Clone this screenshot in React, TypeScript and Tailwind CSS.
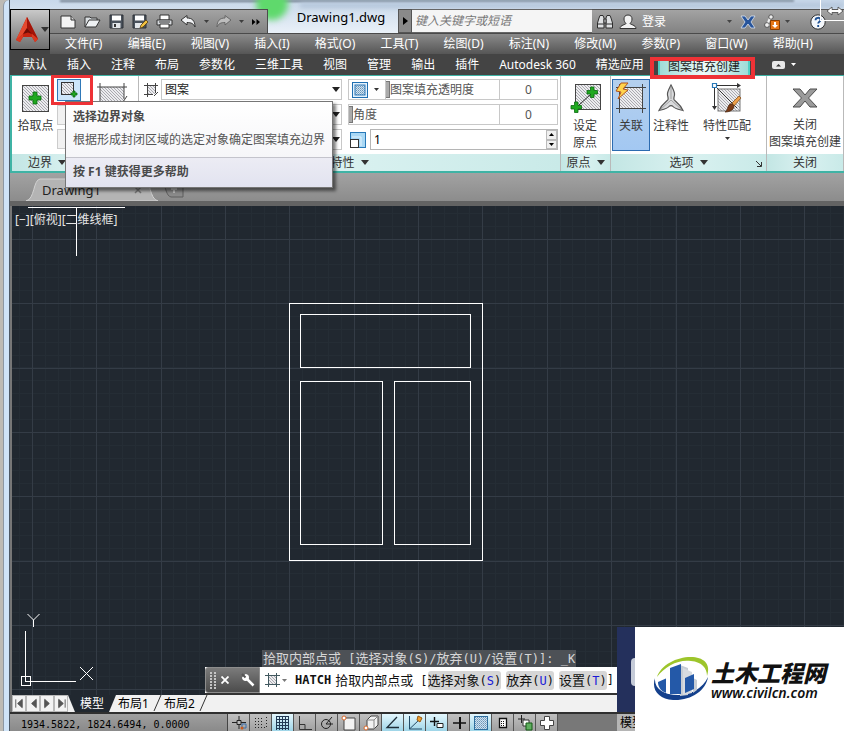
import type { ReactNode } from 'react';
import clsx from 'clsx';

const menus = [
  '文件(F)', '编辑(E)', '视图(V)', '插入(I)', '格式(O)', '工具(T)',
  '绘图(D)', '标注(N)', '修改(M)', '参数(P)', '窗口(W)', '帮助(H)',
];

const ribbonTabs = [
  '默认', '插入', '注释', '布局', '参数化', '三维工具', '视图', '管理',
  '输出', '插件', 'Autodesk 360', '精选应用',
];

function Caret({ className = '' }: { className?: string }) {
  return (
    <svg className={clsx('shrink-0', className)} width="8" height="5" viewBox="0 0 8 5" aria-hidden="true">
      <path d="M0 0h8L4 5z" fill="currentColor" />
    </svg>
  );
}

function SmallCaret({ className = '' }: { className?: string }) {
  return (
    <svg className={clsx('shrink-0', className)} width="5" height="3" viewBox="0 0 5 3" aria-hidden="true">
      <path d="M0 0h5L2.5 3z" fill="currentColor" />
    </svg>
  );
}

// Diagonal fill shared by all the hatch icons
function HatchDefs() {
  return (
    <svg className="absolute h-0 w-0" aria-hidden="true">
      <defs>
        <pattern id="hatch" width="3" height="3" patternUnits="userSpaceOnUse">
          <rect width="3" height="3" fill="#ececef" />
          <path d="M0 0l3 3M-1 2l2 2M2 -1l2 2" stroke="#8c8c93" strokeWidth="0.7" />
        </pattern>
        <pattern id="dots" width="2" height="2" patternUnits="userSpaceOnUse">
          <rect width="2" height="2" fill="#cfe3f2" />
          <rect width="1" height="1" fill="#6a93b5" />
          <rect x="1" y="1" width="1" height="1" fill="#8fb0ca" />
        </pattern>
      </defs>
    </svg>
  );
}

/* ---------- title bar ---------- */

function QuickButton({ label, className, children }: { label: string; className?: string; children: ReactNode }) {
  return (
    <button type="button" aria-label={label} className={clsx('flex shrink-0 items-center justify-center', className)}>
      {children}
    </button>
  );
}

function QuickAccess() {
  return (
    <div className="flex h-6 w-[218px] shrink-0 items-center border-t border-r border-[#4c4c4c] bg-linear-to-b from-[#a3a3a3] to-[#828282] pl-[6px] text-[#3d3d3d]">
      <QuickButton label="新建" className="w-6">
        <svg width="18" height="15" viewBox="0 0 18 15">
          <path d="M2 2h10l4 4v8H2z" fill="#f4f4f4" stroke="#333" />
          <path d="M12 2v4h4" fill="#cfcfcf" stroke="#333" />
        </svg>
      </QuickButton>
      <QuickButton label="打开" className="w-6">
        <svg width="18" height="15" viewBox="0 0 18 15">
          <path d="M2 13V3h5l1 1h6v3" fill="#d9dde0" stroke="#333" />
          <path d="M2 13l4-7h11l-4 7z" fill="#eef1f3" stroke="#333" />
        </svg>
      </QuickButton>
      <QuickButton label="保存" className="w-6">
        <svg width="15" height="15" viewBox="0 0 15 15">
          <path d="M1 1h13v13H1z" fill="#4a525c" stroke="#2c3036" />
          <path d="M3 1.500h9v5H3z" fill="#fff" />
          <path d="M3.500 9h8v5h-8z" fill="#e2e6ea" />
          <path d="M5 10h2v3H5z" fill="#333" />
        </svg>
      </QuickButton>
      <QuickButton label="另存为" className="w-6">
        <svg width="17" height="15" viewBox="0 0 17 15">
          <path d="M1 1h13v13H1z" fill="#4a525c" stroke="#2c3036" />
          <path d="M3 1.500h9v5H3z" fill="#fff" />
          <path d="M3 9h7v5H3z" fill="#e2e6ea" />
          <path d="M8 14l1-3 5-5 2 2-5 5z" fill="#f0c040" stroke="#5a4010" strokeWidth="0.8" />
        </svg>
      </QuickButton>
      <QuickButton label="打印" className="w-6">
        <svg width="17" height="15" viewBox="0 0 17 15">
          <path d="M4 1h9v5H4z" fill="#fff" stroke="#333" />
          <path d="M1 6h15v5H1z" fill="#d7dade" stroke="#333" />
          <path d="M4 10h9v4H4z" fill="#fff" stroke="#333" />
          <path d="M3 8h11" stroke="#333" />
        </svg>
      </QuickButton>
      <QuickButton label="放弃" className="w-6">
        <svg width="17" height="13" viewBox="0 0 17 13">
          <path d="M1 5l6-4.500V3c5 0 8 2.500 8 9-1.500-3.500-4-4.500-8-4.500V10z" fill="#f1f3f5" stroke="#333" />
        </svg>
      </QuickButton>
      <SmallCaret className="mx-1" />
      <QuickButton label="重做" className="w-5">
        <svg width="17" height="13" viewBox="0 0 17 13">
          <path d="M16 5l-6-4.500V3c-5 0-8 2.500-8 9 1.500-3.500 4-4.500 8-4.500V10z" fill="#bdbdbd" stroke="#666" />
        </svg>
      </QuickButton>
      <SmallCaret className="mx-[6px]" />
      <QuickButton label="更多" className="w-3">
        <svg width="8" height="6" viewBox="0 0 8 6">
          <path d="M0 0l3.500 3L0 6zM4.500 0L8 3 4.500 6z" fill="#000" />
        </svg>
      </QuickButton>
    </div>
  );
}

function TitleRow() {
  return (
    <div className="flex h-6">
      <QuickAccess />
      <div className="flex-1 basis-[130px] truncate pl-4 text-center text-[13px] leading-4 text-black">Drawing1.dwg</div>
      <button type="button" aria-label="隐藏搜索" className="flex w-[14px] shrink-0 items-center justify-center border border-[#555] bg-[#8a8a8a]">
        <svg width="5" height="8" viewBox="0 0 5 8"><path d="M0 0l5 4-5 4z" fill="#000" /></svg>
      </button>
      <input
        type="text"
        aria-label="搜索"
        placeholder="键入关键字或短语"
        className="w-[180px] shrink-0 border-y border-[#666] bg-[#f5f5f5] px-[3px] text-xs italic placeholder:text-[#777]"
      />
      <div className="flex w-[252px] shrink-0 items-center border-t border-[#555] bg-linear-to-b from-[#a3a3a3] to-[#828282] pl-1 text-[#444]">
        <button type="button" aria-label="查找">
          <svg width="18" height="16" viewBox="0 0 18 16" fill="#dfe1e3" stroke="#2e2e2e">
            <path d="M3 4l1-2.500h3L8 4v10H1.500V9zM15 4l-1-2.500h-3L10 4v10h6.500V9z" />
            <path d="M8 5h2v4H8z" />
            <path d="M1.500 10H8M10 10h6.500" />
          </svg>
        </button>
        <button type="button" className="ml-1 flex items-center gap-1 text-xs text-white">
          <svg width="20" height="16" viewBox="0 0 20 16">
            <path d="M10 1c3 0 4 2 4 4 0 2-1 3.500-2 4.500 0 1 6 1.500 6 5H2c0-3.500 6-4 6-5C7 8.500 6 7 6 5c0-2 1-4 4-4z" fill="#f2f2f2" stroke="#333" />
          </svg>
          登录
        </button>
        <SmallCaret className="ml-auto" />
        <button type="button" aria-label="Exchange" className="ml-2">
          <svg width="16" height="14" viewBox="0 0 16 14">
            <path d="M1 1h4l3 4 3-4h4l-4 6 4 6h-4L8 9l-3 4H1l4-6z" fill="#27549b" stroke="#d9e2ef" strokeWidth="0.8" />
          </svg>
        </button>
        <button type="button" aria-label="Autodesk 360" className="ml-2">
          <svg width="17" height="16" viewBox="0 0 17 16">
            <path d="M6 4L3 11h6" fill="none" stroke="#f2f2f2" strokeWidth="2" />
            <circle cx="7" cy="3" r="2.200" fill="#eee" stroke="#333" strokeWidth="0.7" />
            <circle cx="3" cy="11" r="2.400" fill="#eee" stroke="#333" strokeWidth="0.7" />
            <path d="M6.500 6.500h9v9h-9z" fill="#e77817" stroke="#8a3f00" />
            <path d="M10 8h2v3h2l-3 3-3-3h2z" fill="#fff" />
          </svg>
        </button>
        <SmallCaret className="ml-1" />
        <button type="button" aria-label="帮助" className="mr-[18px] ml-5">
          <svg width="16" height="16" viewBox="0 0 16 16">
            <circle cx="8" cy="8" r="7.200" fill="#f4f7fb" stroke="#333" />
            <path d="M5.500 6.200C5.500 3 10.500 3 10.500 6c0 1.800-2.300 1.800-2.300 3.600M8.200 11v2" fill="none" stroke="#1d4f91" strokeWidth="1.800" />
          </svg>
        </button>
      </div>
    </div>
  );
}

function Header() {
  return (
    <header className="relative overflow-hidden bg-linear-to-b from-[#c8d8ea] via-[#eef4fa] to-[#f7fafd] pt-[9px]">
      {/* glass caption with the desktop showing through */}
      <div className="absolute inset-x-[50px] top-0 h-[2px] bg-[#6b7886] blur-[1px]" />
      <div className="absolute top-[3px] right-0 left-[290px] h-[5px] bg-[#b3c5da] blur-[2px]" />
      <div className="absolute -top-3 left-[246px] h-8 w-8 rounded-full bg-[#5fd96c] blur-[3px]" />
      <div className="relative flex">
        <div className="w-10 shrink-0 bg-[#444]">
          <button type="button" aria-label="应用程序菜单" className="flex h-[41px] w-10 items-center gap-[2px] border border-black bg-linear-to-b from-[#c9c9c9] to-[#6e6e6e] pl-1">
            <svg className="shrink-0" width="24" height="28" viewBox="0 0 24 28">
              <path d="M12 1L1 24l4 2 3-5h9l3 5 3-3z" fill="#c5230f" />
              <path d="M12 1L1 24l7-6 4-6z" fill="#e5492e" />
              <path d="M12 1l11 22-6-5-5-6z" fill="#a31408" />
              <path d="M8 18l4-6 5 6-4-1.500z" fill="#6f0c05" />
              <path d="M1 24l7-6v3l-3 5zM17 18l6 5-3 3-3-5z" fill="#d93a22" />
            </svg>
            <Caret className="text-[#333]" />
          </button>
        </div>
        <div className="min-w-0 flex-1">
          <TitleRow />
          <nav className="flex h-[21px] items-center justify-between border-t border-[#4a4a4a] bg-linear-to-b from-[#8b8b8b] to-[#565656] pr-[31px] pl-[15px] text-xs text-white">
            {menus.map((menu) => (
              <button key={menu} type="button" className="shrink-0 whitespace-nowrap">{menu}</button>
            ))}
          </nav>
        </div>
        {/* resize pointer over the help button */}
        <svg className="absolute -top-[9px] right-0" width="34" height="24" viewBox="0 0 34 24" aria-hidden="true">
          <path d="M10.500 0v20M10 20.500h24" stroke="#fff" />
          <path d="M17 11l5-4v2.500h6V7l5 4-5 4v-2.500h-6V15z" fill="#fff" stroke="#444" strokeWidth="0.8" />
        </svg>
      </div>
      <nav className="relative flex h-[21px] bg-[#444] pl-[3px] text-xs text-white">
        {ribbonTabs.map((tab) => (
          <button key={tab} type="button" className="shrink-0 px-2.5 whitespace-nowrap">{tab}</button>
        ))}
        <button type="button" className="mt-1 ml-1 shrink-0 border-x-2 border-[#52cfc5] bg-linear-to-r from-[#9fdcd8] via-[#eefafa] to-[#9fdcd8] px-2 leading-4 whitespace-nowrap text-[#222]">
          图案填充创建
        </button>
        <button type="button" aria-label="最小化功能区" className="ml-[22px] flex items-center gap-[6px]">
          <svg width="13" height="8" viewBox="0 0 13 8">
            <rect width="13" height="8" rx="2" fill="#e8e8e8" />
            <path d="M4 5.500L6.500 3 9 5.500z" fill="#333" />
          </svg>
          <SmallCaret />
        </button>
      </nav>
    </header>
  );
}

/* ---------- ribbon ---------- */

function Panel({ title, caret, launcher, className, children }: {
  title: string;
  caret?: boolean;
  launcher?: boolean;
  className?: string;
  children: ReactNode;
}) {
  return (
    <section className={clsx('flex flex-col border-r border-[#b9b9b9]', className)}>
      <div className="flex h-[78px] px-1 pt-[3px]">{children}</div>
      <div className="relative flex h-[17px] items-center justify-center gap-[6px] bg-linear-to-r from-[#c3e6e4] via-[#d9f1f0] to-[#c9eae8] text-xs text-[#333]">
        {title}
        {caret && <Caret />}
        {launcher && (
          <button type="button" aria-label="图案填充设置" className="absolute right-1 bottom-1">
            <svg width="6" height="6" viewBox="0 0 6 6"><path d="M0 0l5 5M5.500 1v4.500H1" fill="none" stroke="#333" /></svg>
          </button>
        )}
      </div>
    </section>
  );
}

function BigButton({ icon, lines, active, className }: { icon: ReactNode; lines: string[]; active?: boolean; className?: string }) {
  return (
    <button
      type="button"
      className={clsx(
        'flex h-[72px] shrink-0 flex-col items-center border pt-[2px] text-xs leading-[17px] whitespace-nowrap text-[#3a3a3a]',
        active ? 'border-[#2c6bb0] bg-linear-to-b from-[#b5d0ee] to-[#a3c8f2]' : 'border-transparent',
        className,
      )}
    >
      <span className="mb-[3px] flex h-8 items-center">{icon}</span>
      {lines.map((line) => <span key={line}>{line}</span>)}
    </button>
  );
}

const plus = (x: number, y: number, s: number) => (
  <path
    d={`M${x + s} ${y}h${s}v${s}h${s}v${s}h-${s}v${s}h-${s}v-${s}h-${s}v-${s}h${s}z`}
    fill="#1fa81f"
    stroke="#0b6b12"
    strokeWidth="0.8"
  />
);

function BoundaryPanel() {
  return (
    <Panel title="边界" caret className="w-[127px] shrink-0 [&>div:last-child]:justify-start [&>div:last-child]:pl-4">
      <BigButton
        className="w-[39px]"
        lines={['拾取点']}
        icon={
          <svg width="27" height="27" viewBox="0 0 27 27">
            <rect x="0.500" y="0.500" width="26" height="26" fill="url(#hatch)" stroke="#444" />
            {plus(7, 7, 4)}
          </svg>
        }
      />
      <div className="ml-[2px] flex flex-col gap-1">
        <div className="relative">
          <button type="button" aria-label="选择边界对象" className="flex h-[22px] w-6 items-center justify-center border border-[#2f78b8] bg-[#cde6fa]">
            <svg width="20" height="18" viewBox="0 0 20 18">
              <rect x="2.500" y="1.500" width="12" height="12" fill="url(#hatch)" stroke="#333" />
              {plus(12, 10, 2)}
            </svg>
          </button>
          {/* highlight frame */}
          <span className="pointer-events-none absolute -top-1 -left-[6px] z-30 h-[30px] w-[42px] border-3 border-[#ee3236]" />
        </div>
        <button type="button" aria-label="删除边界对象" className="h-5 w-6 border border-[#ccc] bg-[#f1f1f1]" />
        <button type="button" aria-label="显示边界对象" className="h-5 w-6 border border-[#ccc] bg-[#f1f1f1]" />
      </div>
      <BigButton
        className="ml-4 w-8"
        lines={[]}
        icon={
          <svg width="32" height="30" viewBox="0 0 32 30">
            <rect x="3" y="4" width="24" height="22" fill="url(#hatch)" />
            <path d="M0 4h30M3 0v30M27 0v16" stroke="#444" />
            <path d="M30 13l-4 6" stroke="#444" />
          </svg>
        }
      />
    </Panel>
  );
}

function PropertySelect({ label, value, icon }: { label: string; value: string; icon?: ReactNode }) {
  return (
    <label className="relative flex h-[21px] items-center gap-[2px]">
      <span className="w-4 shrink-0">{icon}</span>
      <select aria-label={label} defaultValue={value} className="h-full min-w-0 flex-1 appearance-none border border-[#c8c8c8] bg-white px-[3px] text-xs text-[#222]">
        <option>{value}</option>
      </select>
      <Caret className="pointer-events-none absolute right-[2px] text-[#222]" />
    </label>
  );
}

function SliderField({ id, label, children }: { id: string; label: string; children?: ReactNode }) {
  return (
    <div className="flex h-[21px] border border-[#c8c8c8] bg-white text-xs text-[#555]">
      {children}
      <label htmlFor={id} className="flex min-w-0 flex-1 items-center">
        <span className="h-[17px] w-1 shrink-0 border border-l-0 border-[#777] bg-[#aaa]" />
        {label}
      </label>
      <input id={id} type="text" defaultValue="0" className="w-[58px] border-l border-[#c8c8c8] text-center text-[#555]" />
    </div>
  );
}

function PropertiesPanel() {
  return (
    <Panel title="特性" caret className="min-w-0 flex-1 [&>div:first-child]:pr-[2px]">
      <div className="mr-[6px] flex min-w-0 flex-1 flex-col gap-1">
        <PropertySelect
          label="图案填充类型"
          value="图案"
          icon={
            <svg width="17" height="16" viewBox="0 0 17 16">
              <rect x="4" y="3" width="9" height="9" fill="url(#hatch)" />
              <path d="M1 3.500h14M4.500 1v14M12.500 1v10M1 12.500h9M15 10l-4 4" stroke="#444" fill="none" />
            </svg>
          }
        />
        <PropertySelect label="图案填充颜色" value="使用当前项" />
        <PropertySelect label="背景色" value="无" />
      </div>
      <div className="flex w-[210px] shrink-0 flex-col gap-1">
        <SliderField id="transparency" label="图案填充透明度">
          <button type="button" aria-label="透明度" className="flex w-[37px] shrink-0 items-center gap-[6px] border-r border-[#c8c8c8] pl-[3px] text-[#333]">
            <svg width="16" height="16" viewBox="0 0 16 16">
              <rect x="0.500" y="0.500" width="15" height="15" fill="#e4f2fc" stroke="#1f6fb2" />
              <rect x="3" y="3" width="10" height="10" fill="url(#dots)" stroke="#2f78b8" />
            </svg>
            <SmallCaret />
          </button>
        </SliderField>
        <SliderField id="angle" label="角度" />
        <div className="flex h-[21px] items-center gap-1">
          <svg className="ml-[2px] shrink-0" width="16" height="16" viewBox="0 0 16 16" aria-hidden="true">
            <rect x="0.500" y="0.500" width="15" height="15" fill="#a9d8f5" stroke="#2879b8" />
            <rect x="0.500" y="7.500" width="8" height="8" fill="#fff" stroke="#333" />
            <path d="M2 5h9v9" fill="none" stroke="#e5f4fd" />
          </svg>
          <div className="flex h-[21px] min-w-0 flex-1 border border-[#b5b5b5] bg-white">
            <input type="text" aria-label="图案填充比例" defaultValue="1" className="min-w-0 flex-1 px-[3px] text-xs text-black" />
            <div className="flex w-[11px] shrink-0 flex-col text-black">
              <button type="button" aria-label="增大" className="flex flex-1 items-center justify-center border border-[#bbb] bg-[#f0f0f0]">
                <SmallCaret className="rotate-180" />
              </button>
              <button type="button" aria-label="减小" className="flex flex-1 items-center justify-center border border-[#bbb] bg-[#f0f0f0]">
                <SmallCaret />
              </button>
            </div>
          </div>
        </div>
      </div>
    </Panel>
  );
}

function Ribbon() {
  return (
    <div className="flex border-t border-b-2 border-l-2 border-[#3fb3a5] bg-white">
      <BoundaryPanel />
      <PropertiesPanel />
      <Panel title="原点" caret className="w-[50px] shrink-0">
        <BigButton
          className="w-10"
          lines={['设定', '原点']}
          icon={
            <svg width="32" height="32" viewBox="0 0 32 32">
              <rect x="6.500" y="2.500" width="25" height="25" fill="url(#hatch)" stroke="#444" />
              <path d="M9 24L23 11" stroke="#222" />
              {plus(18, 5, 3.5)}
              {plus(2, 20, 3.5)}
            </svg>
          }
        />
      </Panel>
      <Panel title="选项" caret launcher className="w-[156px] shrink-0 [&>div:first-child]:px-px">
        <BigButton
          active
          className="w-[38px]"
          lines={['关联']}
          icon={
            <svg width="32" height="32" viewBox="0 0 32 32">
              <rect x="4" y="5" width="24" height="22" fill="url(#hatch)" />
              <path d="M1 5.500h30M4.500 2v29M27.500 2v29M1 26.500h30" stroke="#444" />
              <path d="M6 1L1 9l5 1-3 7 10-9-5-1 5-6z" fill="#ffd34d" stroke="#b3541e" />
            </svg>
          }
        />
        <BigButton
          className="w-[42px]"
          lines={['注释性']}
          icon={
            <svg width="30" height="30" viewBox="0 0 30 30">
              <path d="M15 2c2 4 4 7 3.500 10-.3 2-1 3-.5 4.500 1 2 6 4 9 11-4-1-8-1.500-10-4-1-1.300-3-1.300-4 0-2 2.500-6 3-10 4 3-7 8-9 9-11 .5-1.500-.2-2.500-.5-4.500C11 9 13 6 15 2z" fill="#d9dadc" stroke="#555" strokeWidth="1.200" />
              <path d="M15 3v13M15 17L4 27M15 17l11 10" stroke="#888" strokeWidth="0.700" />
            </svg>
          }
        />
        <div className="relative">
          <BigButton
            className="ml-[3px] w-[64px]"
            lines={['特性匹配']}
            icon={
              <svg width="32" height="32" viewBox="0 0 32 32">
                <rect x="7" y="7" width="22" height="22" fill="url(#hatch)" stroke="#777" />
                <path d="M5 3.500h24M3.500 5v22" stroke="#333" />
                <path d="M26 1l4 2.500L26 6zM1 24l2.500 4L6 24z" fill="#333" />
                <path d="M4 4l22 22" stroke="#333" />
                <path d="M1.500 1.500h4v4h-4z" fill="#fff" stroke="#2879b8" strokeWidth="1.200" />
                <path d="M21 21l7-7 2 2-7 8z" fill="#eda04a" stroke="#7b4210" strokeWidth="0.700" />
                <path d="M14 30c3-1 2-6 5-8 2-1 4 1 4 3-1 4-6 5-9 5z" fill="#7a3b16" stroke="#44200a" strokeWidth="0.700" />
              </svg>
            }
          />
          <SmallCaret className="absolute bottom-[14px] left-[33px] text-[#333]" />
        </div>
      </Panel>
      <Panel title="关闭" className="w-[77px] shrink-0 [&>div:first-child]:px-0">
        <BigButton
          className="w-full"
          lines={['关闭', '图案填充创建']}
          icon={
            <svg width="26" height="20" viewBox="0 0 26 20">
              <path d="M1 1h7l5 6 5-6h7l-8.500 9L25 19h-7l-5-6-5 6H1l8.500-9z" fill="#9b9b9b" stroke="#4d4d4d" />
            </svg>
          }
        />
      </Panel>
    </div>
  );
}

function Tooltip() {
  return (
    <div role="tooltip" className="absolute top-[101px] left-[55px] z-20 border border-[#767676] bg-linear-to-b from-white to-[#f1f1f5] text-xs text-[#555] shadow-[3px_3px_3px_rgba(0,0,0,0.5)]">
      <div className="px-[7px]">
        <p className="pt-[6px] leading-[18px] font-bold text-[#4a4a4a]">选择边界对象</p>
        <p className="py-[5px] leading-[18px] whitespace-nowrap">根据形成封闭区域的选定对象确定图案填充边界</p>
      </div>
      <p className="mt-[3px] border-t border-[#c4c4cc] bg-linear-to-b from-[#ececf4] to-[#e2e3f0] px-[7px] pt-[5px] pb-[6px] leading-[18px] font-bold text-[#4a4a4a]">
        按 F1 键获得更多帮助
      </p>
    </div>
  );
}

function DocumentTabs() {
  return (
    <div className="flex h-[33px] border-b-[5px] border-[#636363] bg-linear-to-b from-[#a2a2a2] to-[#8c8c8c] pt-[5px] pl-4">
      <div className="relative flex w-[132px] items-center pl-4 text-[13px] leading-4 text-[#222]">
        <svg className="absolute inset-0 h-full w-full" viewBox="0 0 132 23" preserveAspectRatio="none" aria-hidden="true">
          <path d="M0 23C9 21 7 2 14 1h104c7 1 5 20 14 22z" fill="#b4b4b4" stroke="#d2d2d2" />
        </svg>
        <button type="button" className="relative">Drawing1</button>
        <button type="button" aria-label="关闭图形" className="relative ml-auto mr-4">
          <svg width="8" height="8" viewBox="0 0 8 8"><path d="M1 1l6 6M7 1L1 7" stroke="#777" strokeWidth="1.500" /></svg>
        </button>
      </div>
      <button type="button" aria-label="新图形" className="ml-1">
        <svg width="24" height="16" viewBox="0 0 24 16">
          <path d="M1 1h20v14H9C4 14 4 5 1 1z" fill="#8a8a8a" stroke="#5f5f5f" />
          <path d="M9 7h6M12 4v7" stroke="#bbb" strokeWidth="2" />
        </svg>
      </button>
    </div>
  );
}

/* ---------- drawing area ---------- */

const majorStep = 64.35;
const majorX = Array.from({ length: 30 }, (_, i) => Math.round(20 + i * majorStep));
const majorY = Array.from({ length: 20 }, (_, i) => Math.round(33 + i * majorStep));
const minorX = Array.from({ length: 150 }, (_, i) => Math.round(7 + (i * majorStep) / 5));
const minorY = Array.from({ length: 100 }, (_, i) => Math.round(7 + (i * majorStep) / 5));

function Model() {
  return (
    <svg className="absolute inset-0 h-full w-full" fill="none" shapeRendering="crispEdges" aria-label="模型空间">
      <g stroke="#252d35">
        {minorX.map((x) => <line key={`x${x}`} x1={x + 0.5} x2={x + 0.5} y1="0" y2="100%" />)}
        {minorY.map((y) => <line key={`y${y}`} y1={y + 0.5} y2={y + 0.5} x1="0" x2="100%" />)}
      </g>
      <g stroke="#343c46">
        {majorX.map((x) => <line key={`x${x}`} x1={x + 0.5} x2={x + 0.5} y1="0" y2="100%" />)}
        {majorY.map((y) => <line key={`y${y}`} y1={y + 0.5} y2={y + 0.5} x1="0" x2="100%" />)}
      </g>
      <g stroke="#fff">
        <rect x="277.500" y="97.500" width="193" height="257" />
        <rect x="288.500" y="108.500" width="170" height="53" />
        <rect x="288.500" y="175.500" width="82" height="163" />
        <rect x="382.500" y="175.500" width="76" height="163" />
        {/* cursor */}
        <path d="M16 1.500h97M64.500 1v49" />
        {/* UCS icon */}
        <path d="M13.500 425v50.500H64M9.500 470.500h9v9h-9z" />
      </g>
      <path d="M15.500 408l6 6 6-6M21.500 414v7M68 461l13 13M81 461l-13 13" stroke="#fff" shapeRendering="auto" />
    </svg>
  );
}

// Full-width characters are set one size up from the monospaced latin text
function CommandText({ text }: { text: string }) {
  return (
    <>
      {text.split(/([\x20-\x7e]+)/).map((part, i) => (
        <span key={i} className={i % 2 ? 'text-xs' : 'text-[13px]'}>{part}</span>
      ))}
    </>
  );
}

const options = [
  { name: '选择对象', key: 'S' },
  { name: '放弃', key: 'U' },
  { name: '设置', key: 'T' },
];

function CommandLine() {
  return (
    <div className="absolute right-[227px] bottom-0 left-[193px] font-['DejaVu_Sans_Mono','Noto_Sans_CJK_SC',monospace]">
      <p className="ml-[57px] w-fit bg-[#4d5156] px-px leading-4 whitespace-pre text-[#d6d6d6]">
        <CommandText text="拾取内部点或 [选择对象(S)/放弃(U)/设置(T)]: _K" />
      </p>
      <div className="flex h-7 border-b-2 border-[#333] bg-white">
        <div className="flex w-[55px] shrink-0 items-center rounded-l-[3px] border border-[#8d8d8d] bg-linear-to-b from-[#7b7b7b] to-[#4c4c4c] pl-1">
          <svg width="6" height="17" viewBox="0 0 6 17" aria-hidden="true">
            <path d="M1 0v17M5 0v17" stroke="#c5c5c5" strokeWidth="2" strokeDasharray="2 1" />
          </svg>
          <button type="button" aria-label="关闭" className="ml-[5px]">
            <svg width="8" height="8" viewBox="0 0 8 8"><path d="M0.500 0.500l7 7M7.500 0.500l-7 7" stroke="#fff" strokeWidth="1.800" /></svg>
          </button>
          <button type="button" aria-label="自定义" className="ml-3">
            <svg width="14" height="14" viewBox="0 0 14 14">
              <path d="M6 6l6.500 6.500" stroke="#fff" strokeWidth="2.500" />
              <path d="M1 4.500L4.500 1C8 1 9 5 7 7 5 9 1 8 1 4.500zM1 1l3.500 3.500" fill="#fff" />
              <path d="M1 1l3.500 3.500" stroke="#555" strokeWidth="2" />
            </svg>
          </button>
        </div>
        <div className="flex min-w-0 flex-1 items-center overflow-hidden pl-1 whitespace-pre text-[#111]">
          <svg className="shrink-0" width="17" height="16" viewBox="0 0 17 16" aria-hidden="true">
            <rect x="4" y="3" width="9" height="9" fill="url(#hatch)" />
            <path d="M1 3.500h15M4.500 1v14M12.500 1v14M1 12.500h15" stroke="#41585f" fill="none" />
          </svg>
          <SmallCaret className="ml-px text-[#777]" />
          <span className="ml-2 text-xs font-bold">HATCH</span>
          <span className="ml-1"><CommandText text="拾取内部点或 [" /></span>
          {options.map((option, i) => (
            <button key={option.key} type="button" className={clsx('rounded-[3px] bg-[#d6d6d6] leading-[18px]', i > 0 && 'ml-[5px]')}>
              <CommandText text={`${option.name}(`} />
              <span className="text-xs text-[#1a1ad6]">{option.key}</span>
              <span className="text-xs">)</span>
            </button>
          ))}
          <span className="text-xs">]</span>
        </div>
      </div>
    </div>
  );
}

/* ---------- bottom bars ---------- */

const navArrows = [
  { label: '第一个', d: 'M3 2v9M10 2L5 6.500l5 4.500z' },
  { label: '上一个', d: 'M10 2L5 6.500l5 4.500z' },
  { label: '下一个', d: 'M4 2l5 4.500L4 11z' },
  { label: '最后一个', d: 'M4 2l5 4.500L4 11zM11 2v9' },
];

function LayoutTabs() {
  return (
    <div className="flex h-[17px] bg-[#f1f1f1] text-xs leading-[17px] text-black">
      {navArrows.map((arrow) => (
        <button key={arrow.label} type="button" aria-label={arrow.label} className="w-[14px] shrink-0 border border-[#b9b9b9] bg-[#f3f3f3]">
          <svg width="12" height="13" viewBox="0 0 13 13"><path d={arrow.d} fill="#555" stroke="#555" /></svg>
        </button>
      ))}
      <button type="button" className="w-12 bg-[#212830] text-white [clip-path:polygon(0_0,100%_0,calc(100%-7px)_100%,7px_100%)]">模型</button>
      {['布局1', '布局2'].map((name) => (
        <button key={name} type="button" className="flex items-center pl-[2px]">
          {name}
          <svg className="ml-1" width="9" height="17" viewBox="0 0 9 17" aria-hidden="true">
            <path d="M8 0L1 16" stroke="#333" />
          </svg>
        </button>
      ))}
    </div>
  );
}

const cyan = 'bg-linear-to-b from-[#e4f7fd] to-[#9ed5e8]';

const toggles: { label: string; on?: boolean; icon: ReactNode }[] = [
  { label: '推断约束', icon: <><path d="M8 1v13M1 7.500h14" stroke="#222" /><path d="M6 5.500h4v4H6z" fill="#bbb" stroke="#222" /><path d="M11 9h4v4h-4z" fill="none" stroke="#3a6ea8" /><circle cx="11" cy="13" r="1.500" fill="#c85a1c" /></> },
  { label: '捕捉', icon: <path d="M2 3.500h9M2 6.500h9M2 9.500h9M2 12.500h12M13.500 2v11" stroke="#222" strokeDasharray="1 2" /> },
  { label: '栅格', on: true, icon: <path d="M1.500 1v14M4.500 1v14M7.500 1v14M10.500 1v14M13.500 1v14M1 1.500h13M1 4.500h13M1 7.500h13M1 10.500h13M1 13.500h13" stroke="#223a55" /> },
  { label: '正交', icon: <path d="M2.500 1v13.500H15M2 9.500h6v5" stroke="#333" fill="none" /> },
  { label: '极轴', icon: <><circle cx="7" cy="9" r="4.500" fill="none" stroke="#222" /><path d="M14 9H7l6-7" stroke="#222" fill="none" /></> },
  { label: '对象捕捉', icon: <><path d="M3 3h11v12H3z" fill="#f2f2f2" stroke="#444" /><circle cx="3" cy="3" r="2" fill="#fff" stroke="#d8682a" /></> },
  { label: '三维对象捕捉', icon: <><path d="M4 5l4-4h7v9l-4 4H4z" fill="#f2f2f2" stroke="#444" /><path d="M4 5h7v9M11 5l4-4" fill="none" stroke="#888" /><circle cx="3" cy="13" r="2" fill="#fff" stroke="#d8682a" /></> },
  { label: '对象捕捉追踪', on: true, icon: <path d="M14 12.500H2L12 2" stroke="#1f2f3a" fill="none" strokeWidth="1.300" /> },
  { label: '动态 UCS', on: true, icon: <><path d="M2.500 1v13H15M2.500 14L13 4" stroke="#224a66" fill="none" /><path d="M11 1l4 2-2 4-3-2z" fill="#f0a030" stroke="#9a5a10" /></> },
  { label: '动态输入', on: true, icon: <><path d="M1 6.500h9M5.500 2v9" stroke="#111" strokeWidth="1.400" /><path d="M8 8.500h6v4H8z" fill="#fff" stroke="#222" /></> },
  { label: '线宽', icon: <><path d="M2 8h13" stroke="#111" strokeWidth="1.500" /><path d="M9 2v12" stroke="#111" strokeWidth="2" /></> },
  { label: '透明度', on: true, icon: <rect x="1.500" y="1.500" width="13" height="13" fill="url(#dots)" stroke="#2f6f9f" /> },
  { label: '快捷特性', icon: <><path d="M4.500 3.500h7v9h-7z" fill="#fff" stroke="#111" strokeWidth="1.300" /><path d="M6 6.500h4M6 8.500h4M6 10.500h4" stroke="#111" strokeDasharray="1 1" /></> },
  { label: '选择循环', icon: <><path d="M1 4h7M4.500 0v8" stroke="#222" /><path d="M6 5h6v6H6z" fill="#fff" stroke="#333" /><path d="M9 8h6v7H9z" fill="#5fae5f" stroke="#145a14" /></> },
  { label: '注释监视器', icon: <path d="M5.500 1.500h5v4h4v5h-4v4h-5v-4h-4v-5h4z" fill="#fff" stroke="#444" /> },
];

function StatusBar() {
  return (
    <footer className="flex h-[19px] overflow-hidden border-t-2 border-[#2f2f2f] bg-[#787878]">
      <output className="flex w-[218px] shrink-0 items-center border-r border-[#444] bg-linear-to-b from-[#9f9f9f] to-[#8a8a8a] pt-1 pl-[11px] font-['DejaVu_Sans_Mono',monospace] text-[10px] leading-[17px] text-black">
        1934.5822, 1824.6494, 0.0000
      </output>
      {toggles.map((toggle) => (
        <button
          key={toggle.label}
          type="button"
          aria-label={toggle.label}
          aria-pressed={!!toggle.on}
          className={clsx('flex w-[22px] shrink-0 justify-center border-r border-[#555] pt-px', toggle.on ? cyan : 'bg-linear-to-b from-[#c0c0c0] to-[#a0a0a0]')}
        >
          <svg width="16" height="16" viewBox="0 0 16 16" fill="none">{toggle.icon}</svg>
        </button>
      ))}
      <span className="flex-1" />
      <button type="button" className="w-[227px] shrink-0 bg-[#b5b5b5] pl-[3px] text-left text-xs leading-[17px] text-black">模型</button>
    </footer>
  );
}

function SiteBadge() {
  return (
    <div className="absolute right-0 bottom-0 z-10 flex h-[104px] w-[227px]">
      <div className="relative h-[85px] w-[18px] bg-[#24305c]">
        <span className="absolute top-[31px] right-0 h-7 w-1 rounded-l-[4px] bg-[#c5cbd8]" />
      </div>
      <div className="flex flex-1 items-center bg-white pl-[18px]">
        <svg width="58" height="50" viewBox="0 0 58 50" aria-hidden="true">
          <path d="M4 23C8 10 26 2 40 3c12 1 18 8 14 19 0-8-5-14-16-15C26 5 12 12 4 23z" fill="#9dc52b" />
          <path d="M2 24c-4 12 4 21 18 22 17 1 33-9 35-23-5 11-17 18-30 18C11 41 1 35 2 24z" fill="#14408c" />
          <path d="M27 11l8 3v27l-8 1zM40 24l4 2v10l-4 3z" fill="#c7cdd4" />
          <path d="M17 14l11-4v30H17z" fill="#2459a8" />
          <path d="M5 28l9-4v15c-5-1-9-5-9-11z" fill="#2459a8" />
          <path d="M30 14l9 4v21l-9 2z" fill="#d7dbe0" />
          <path d="M32 24l9-4v15l-9 4z" fill="#2459a8" />
          <path d="M13 22l4-2v20l-4-1z" fill="#fff" />
        </svg>
        <div className="flex flex-col pt-1 whitespace-nowrap text-[#111]">
          <span className="text-[23px] leading-6 font-black italic">土木工程网</span>
          <span className="text-sm leading-4 font-semibold italic">www.civilcn.com</span>
        </div>
      </div>
    </div>
  );
}

export default function App() {
  return (
    <div className="flex min-h-screen bg-[#bdbbb5] font-['Noto_Sans','Noto_Sans_CJK_SC',sans-serif]">
      <HatchDefs />
      <div className="ml-[3px] w-[7px] shrink-0 rounded-tl-md border-r border-l border-r-[#4e5a66] border-l-[#8c98a4] bg-[#cfe4f8]" />
      <div className="relative flex min-w-0 flex-1 flex-col">
        <Header />
        <Ribbon />
        <DocumentTabs />
        {/* highlight frame around the contextual tab */}
        <span className="pointer-events-none absolute top-[57px] right-[89px] z-30 h-[22px] w-[105px] border-4 border-[#ee3236]" />
        <Tooltip />
        <main className="flex flex-1 flex-col border-l-2 border-[#777]">
          <div className="relative min-h-[480px] flex-1 overflow-hidden bg-[#212830]">
            <Model />
            <span className="absolute top-[6px] left-[3px] text-xs text-[#e6e6e6]">[−][俯视][二维线框]</span>
            <CommandLine />
          </div>
          <LayoutTabs />
        </main>
        <StatusBar />
        <SiteBadge />
      </div>
    </div>
  );
}
